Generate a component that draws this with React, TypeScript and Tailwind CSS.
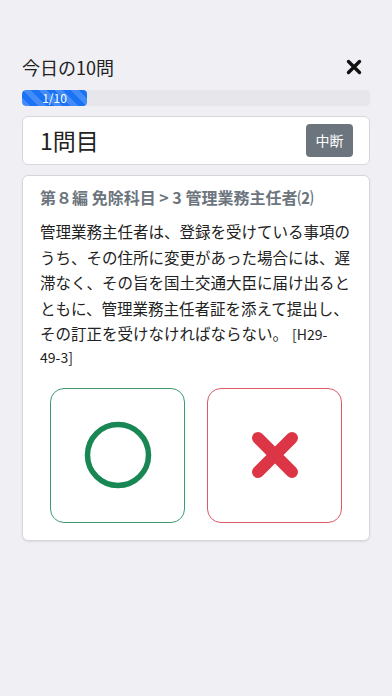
const font = { fontFamily: '"Noto Sans CJK JP", "Noto Sans", sans-serif' };

function CloseIcon() {
  return (
    <svg width="18" height="18" viewBox="0 0 18 18" fill="none">
      <path d="M3.5 3.5 L14.5 14.5 M14.5 3.5 L3.5 14.5" stroke="#111" strokeWidth="3.4" strokeLinecap="round" />
    </svg>
  );
}

function Circle() {
  return (
    <svg width="68" height="68" viewBox="0 0 68 68" fill="none">
      <circle cx="34" cy="34" r="30.5" stroke="#198754" strokeWidth="5.5" />
    </svg>
  );
}

function Cross() {
  return (
    <svg width="48" height="48" viewBox="0 0 48 48" fill="none">
      <path d="M7 7 L41 41 M41 7 L7 41" stroke="#dc3545" strokeWidth="12" strokeLinecap="round" />
    </svg>
  );
}

export default function App() {
  return (
    <div className="min-h-[696px] w-full bg-[#efeff4] px-[22px] pt-[54px]" style={font}>
      {/* header */}
      <div className="flex items-center justify-between h-[26px]">
        <h1 className="text-[18px] leading-[26px] text-[#222]">今日の10問</h1>
        <button className="mr-[7px]">
          <CloseIcon />
        </button>
      </div>

      {/* progress */}
      <div className="mt-[10px] h-[16px] w-full rounded-[4px] bg-[#e6e6eb] overflow-hidden">
        <div
          className="h-full w-[65px] rounded-[4px] bg-[#1a73f5] flex items-center justify-center text-[12px] leading-none text-white bg-[length:16px_16px] bg-[linear-gradient(45deg,rgba(255,255,255,0.18)_25%,transparent_25%,transparent_50%,rgba(255,255,255,0.18)_50%,rgba(255,255,255,0.18)_75%,transparent_75%,transparent)]"
        >
          1/10
        </div>
      </div>

      {/* question number */}
      <div className="mt-[10px] h-[49px] rounded-[6px] border border-[#d6d6db] bg-white flex items-center justify-between pl-[17px] pr-[16px]">
        <span className="text-[23px] text-[#222]">1問目</span>
        <button className="h-[33px] w-[47px] rounded-[4px] bg-[#6c757d] text-[14px] text-white">中断</button>
      </div>

      {/* question card */}
      <div className="mt-[10px] rounded-[6px] border border-[#d6d6db] bg-white px-[17px] pt-[9px] pb-[17px] shadow-[0_1px_2px_rgba(0,0,0,0.08)]">
        <div className="text-[16px] leading-[24px] font-bold text-[#6c757d]">第８編 免除科目 &gt; 3 管理業務主任者⑵</div>
        <p className="mt-[10px] text-[14px] leading-[21px] text-[#222]">
          <span className="text-[15.5px] leading-[25.5px]">
            管理業務主任者は、登録を受けている事項のうち、その住所に変更があった場合には、遅滞なく、その旨を国土交通大臣に届け出るとともに、管理業務主任者証を添えて提出し、その訂正を受けなければならない。
          </span>
          <span className="ml-[4px]">[H29-<span className="whitespace-nowrap">49-3]</span></span>
        </p>

        <div className="mt-[20px] flex justify-center gap-[22px]">
          <button className="h-[135px] w-[135px] rounded-[14px] border border-[#3f9a6e] flex items-center justify-center">
            <Circle />
          </button>
          <button className="h-[135px] w-[135px] rounded-[14px] border border-[#dc5a66] flex items-center justify-center">
            <Cross />
          </button>
        </div>
      </div>
    </div>
  );
}
